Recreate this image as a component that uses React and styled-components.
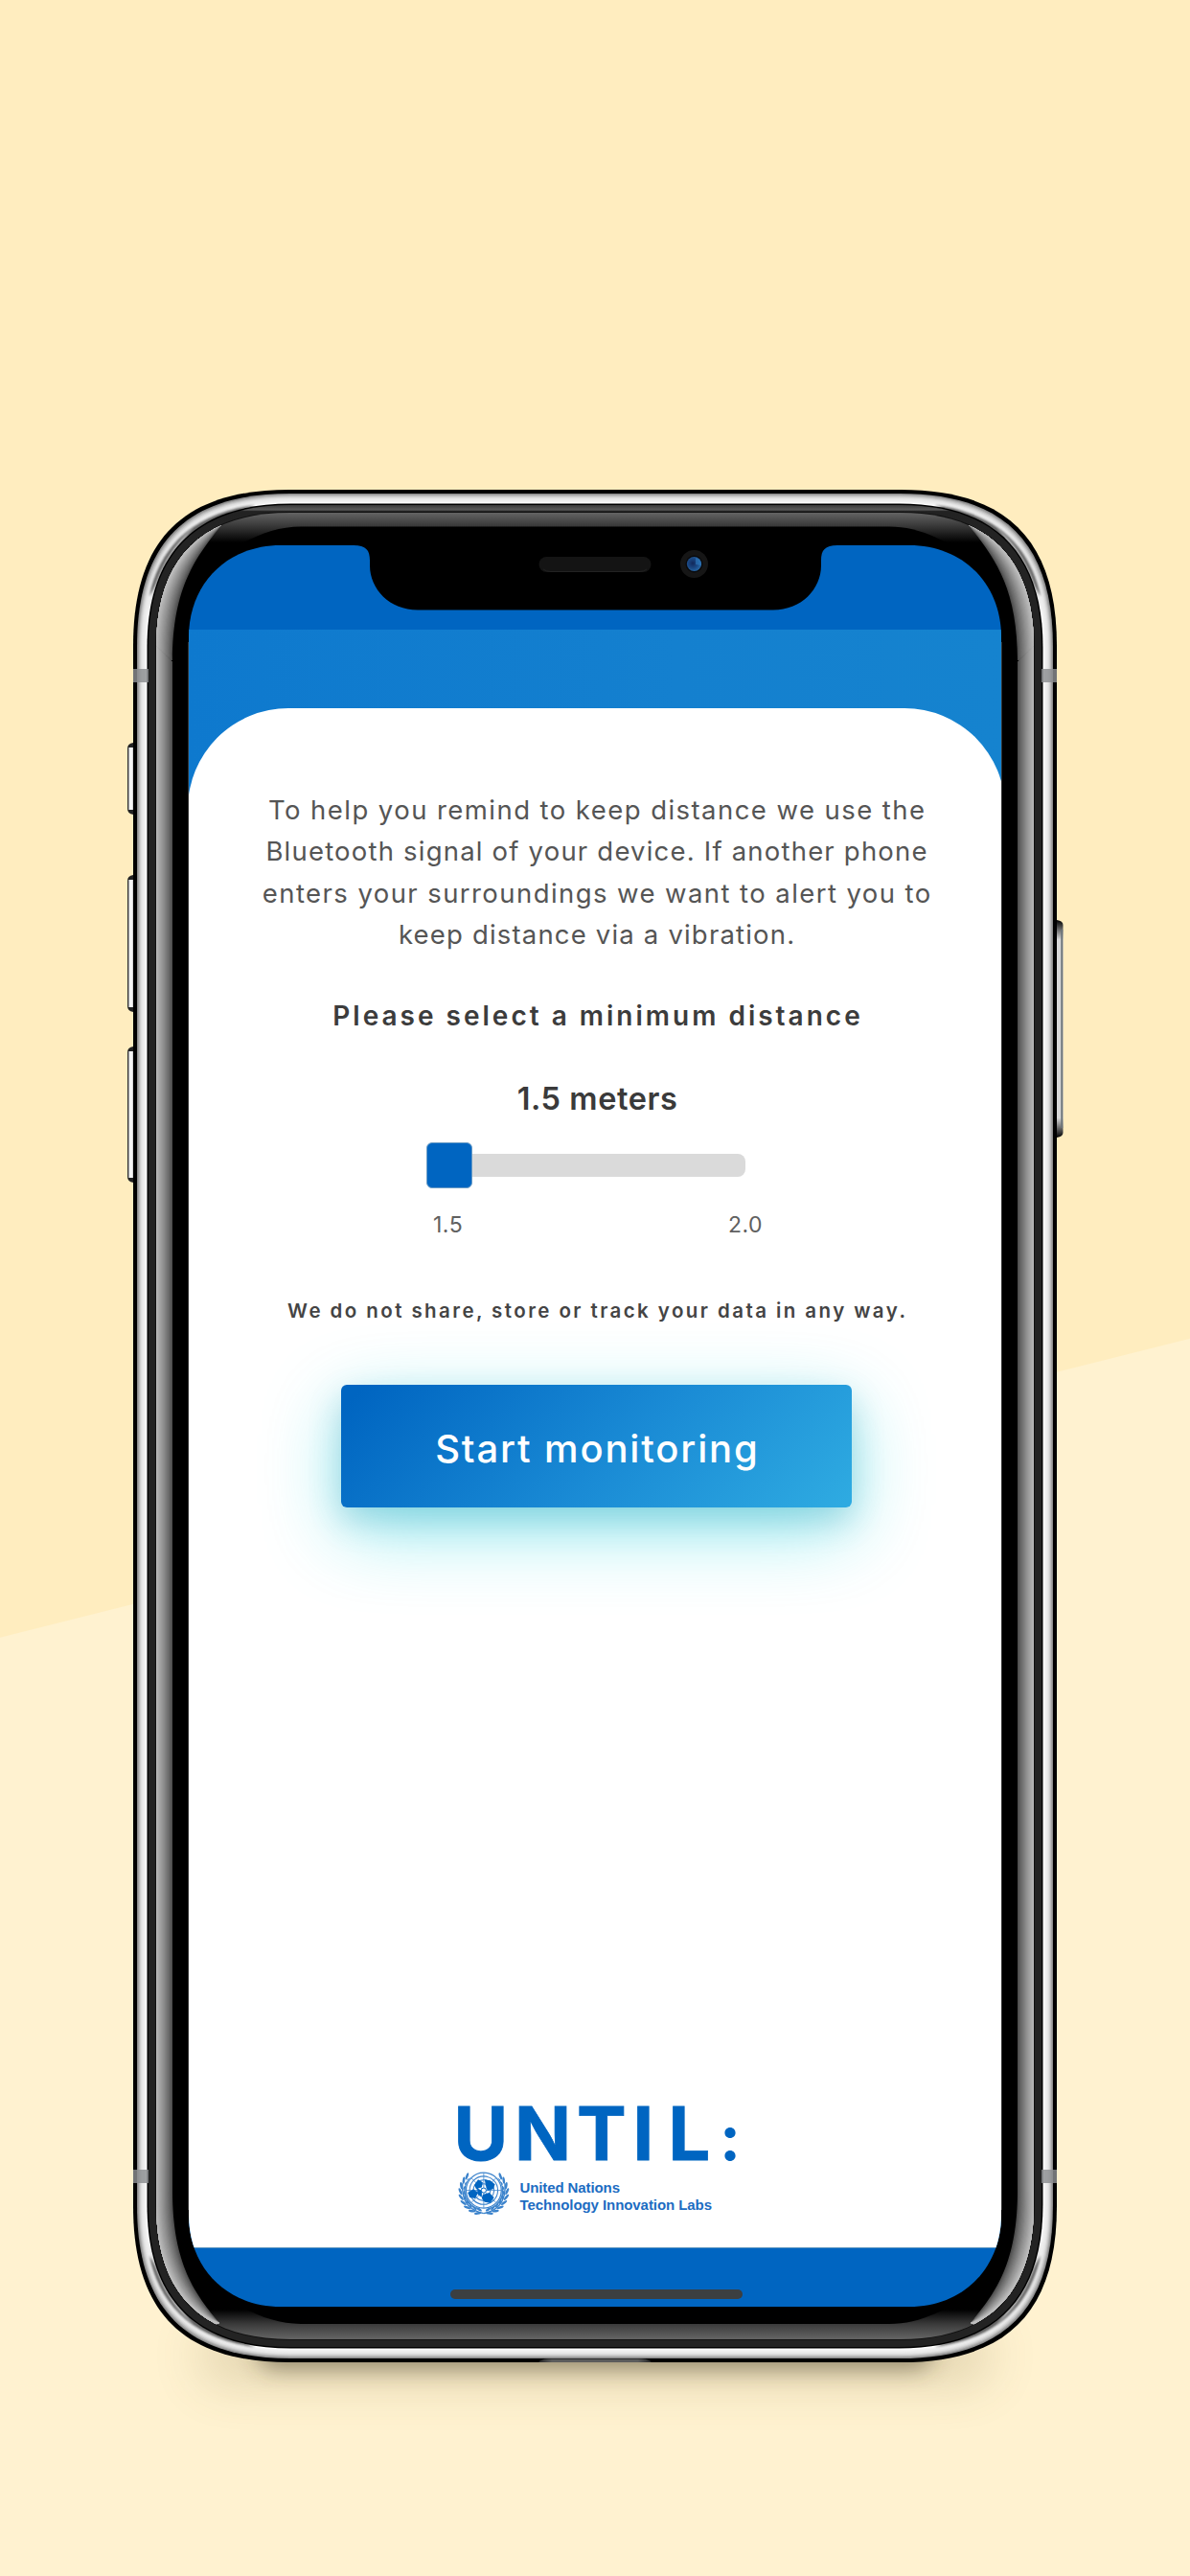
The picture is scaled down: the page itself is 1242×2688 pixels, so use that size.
import React from "react";
import styled, { createGlobalStyle } from "styled-components";

const BLUE = "#0065c1";

const GlobalStyle = createGlobalStyle`
  body {
    margin: 0;
    font-family: Inter, "Liberation Sans", sans-serif;
  }
`;

const Page = styled.main`
  box-sizing: border-box;
  width: 1242px;
  height: 2688px;
  padding-top: 511px;
  display: flex;
  flex-direction: column;
  align-items: center;
  overflow: hidden;
  background: linear-gradient(
    165.9deg,
    #ffedbf calc(50% + 202px),
    #fff2d0 calc(50% + 203px)
  );
`;

const Phone = styled.div`
  position: relative;
  box-sizing: border-box;
  width: 964px;
  height: 1954px;
  padding: 58px;
`;

const ChassisArt = styled.svg`
  position: absolute;
  left: -139px;
  top: -511px;
  width: 1242px;
  height: 2688px;
`;

const NotchArt = styled.svg`
  position: absolute;
  left: 0;
  top: 0;
  width: 848px;
  height: 80px;
`;

const Screen = styled.div`
  position: relative;
  display: flex;
  flex-direction: column;
  width: 848px;
  height: 1838px;
  background: ${BLUE};
  clip-path: path("${(p) => p.$shape}");
`;

const StatusBar = styled.div`
  flex: none;
  height: 88px;
`;

const Body = styled.div`
  flex: 1;
  display: flex;
  padding-top: 82px;
  background: linear-gradient(90deg, #0e79ce, #1480cf 60%, #1583cf);
`;

const Panel = styled.section`
  flex: none;
  box-sizing: border-box;
  width: 853px;
  margin-left: -1px;
  padding: 85px 0 30px;
  display: flex;
  flex-direction: column;
  align-items: center;
  background: #fff;
  border-radius: 105px 105px 0 0;
`;

const HomeBar = styled.footer`
  flex: none;
  box-sizing: border-box;
  height: 62px;
  padding-top: 43px;
  border-top: 1px solid #5f96c0;
  display: flex;
  justify-content: center;
`;

const HomeIndicator = styled.div`
  width: 305px;
  height: 10px;
  margin-left: 2px;
  border-radius: 5px;
  background: #3c3f41;
`;

const Intro = styled.p`
  margin: 0;
  font-size: 27.5px;
  line-height: 43.3px;
  text-align: center;
  color: #555;
`;

const Line = styled.span`
  display: block;
  white-space: nowrap;
  letter-spacing: ${(p) => p.$track}px;
  text-indent: ${(p) => p.$track}px;
`;

const Heading = styled.h2`
  margin: 43px 0 0;
  font-size: 28px;
  font-weight: 600;
  line-height: 40px;
  letter-spacing: 3px;
  text-indent: 3px;
  color: #3c3c3c;
`;

const Value = styled.output`
  margin: 46.5px 0 0 2px;
  font-size: 32.5px;
  font-weight: 600;
  line-height: 40px;
  letter-spacing: 0.56px;
  color: #3a3a3a;
`;

const Slider = styled.div`
  display: flex;
  align-items: center;
  width: 333px;
  height: 47px;
  margin: 25.5px 23px 0 0;
`;

const Thumb = styled.div`
  flex: none;
  box-sizing: border-box;
  width: 48px;
  height: 48px;
  border: 1px solid #6b9cc6;
  border-radius: 6px;
  background: ${BLUE};
`;

const Track = styled.div`
  flex: 1;
  height: 24px;
  border-radius: 0 8px 8px 0;
  background: #dadada;
`;

const Scale = styled.div`
  display: flex;
  justify-content: space-between;
  width: 344px;
  margin: 24px 0 0 3px;
  font-size: 23px;
  line-height: 30px;
  letter-spacing: 0.5px;
  color: #606060;
`;

const Note = styled.p`
  margin: 60px 0 0;
  font-size: 20.5px;
  font-weight: 600;
  line-height: 30px;
  letter-spacing: 2.43px;
  text-indent: 2.43px;
  white-space: nowrap;
  color: #444;
`;

const StartButton = styled.button`
  width: 533px;
  height: 128px;
  flex: none;
  margin: 62px 0 0;
  padding: 4px 0 0;
  border: 0;
  border-radius: 6px;
  font: 500 40px Inter, "Liberation Sans", sans-serif;
  letter-spacing: 1.85px;
  text-indent: 1.85px;
  color: #fff;
  background: linear-gradient(135deg, #0065c1 4%, #1a8bd5 55%, #2eaae1 98%);
  box-shadow: 0 14px 34px rgba(0, 120, 160, 0.24),
    0 24px 80px rgba(20, 215, 225, 0.44);
`;

const Logo = styled.svg`
  flex: none;
  width: 295px;
  height: 120px;
  margin-top: auto;
  overflow: visible;
`;

/* Closed rounded shape whose corners are single cubic curves of reach r. */
function shell(x, y, w, h, r, k) {
  const c = r * (1 - k);
  const R = x + w;
  const B = y + h;
  return (
    `M${x} ${y + r} C${x} ${y + c} ${x + c} ${y} ${x + r} ${y} ` +
    `H${R - r} C${R - c} ${y} ${R} ${y + c} ${R} ${y + r} ` +
    `V${B - r} C${R} ${B - c} ${R - c} ${B} ${R - r} ${B} ` +
    `H${x + r} C${x + c} ${B} ${x} ${B - c} ${x} ${B - r} Z`
  );
}

/* Shell at distance d inside the outer edge of the phone. */
const inset = (d, r, k) => shell(139 + d, 511 + d, 964 - 2 * d, 1954 - 2 * d, r, k);

const grey = (v) => {
  const n = Math.round(v);
  return `rgb(${n},${n},${n})`;
};

const STEEL = [140, 164, 190, 210, 224, 232, 236, 240, 246, 254];
const BEVEL = Array.from({ length: 16 }, (_, i) => i / 15);
const CORNERS = [
  "translate(0 0)",
  "translate(1242 0) scale(-1 1)",
  "translate(0 2976) scale(1 -1)",
  "translate(1242 2976) scale(-1 -1)",
];

/* Left-hand glare band: t = 0 spans the whole bevel, t = 1 hugs its outer edge. */
function glare(t) {
  const m = (a, b) => a + (b - a) * t;
  const x = m(180, 163);
  const cx = m(205, 190);
  const cy = m(581, 566);
  const straight = m(690, 674);
  const foot = 2976;
  return (
    `M150 ${straight} L${x} ${straight} C${x} 612 ${cx} ${cy} 231 548 L150 520 Z ` +
    `M150 ${straight - 1} H${x} V${foot - straight + 1} H150 Z ` +
    `M150 ${foot - straight} L${x} ${foot - straight} C${x} ${foot - 612} ${cx} ${foot - cy} 229 ${foot - 552} L150 ${foot - 520} Z`
  );
}

function Glare() {
  return BEVEL.map((t) => (
    <path key={t} d={glare(t)} fill={grey(78 + 112 * Math.pow(t, 0.85))} />
  ));
}

/* Dark reflection where the steel band turns the corner; it tapers at both ends. */
function CornerShade() {
  return (
    <g clipPath="url(#steelClip)">
      <path
        d="M156 622 C166 574 198 536 266 527 C222 545 190 568 156 622 Z"
        fill="#2e2e2e"
        opacity=".75"
        filter="url(#smudge)"
      />
      <path
        d="M155 640 C160 604 176 572 202 550 C180 578 164 604 155 640 Z"
        fill="#c8c8c8"
        opacity=".85"
        filter="url(#smudge)"
      />
    </g>
  );
}

function SideButton({ y, h }) {
  return (
    <g>
      <path
        d={`M143 ${y} H139 Q133 ${y + 1} 133 ${y + 6} V${y + h - 6} Q133 ${y + h - 1} 139 ${y + h} H143 Z`}
        fill="#222"
      />
      <rect x="133.8" y={y + 5} width="6.6" height={h - 10} fill="url(#key)" />
    </g>
  );
}

function Chassis() {
  return (
    <ChassisArt viewBox="0 0 1242 2688" aria-hidden="true">
      <defs>
        <clipPath id="bevelClip">
          <path d={inset(24, 140, 0.66)} />
        </clipPath>
        <clipPath id="steelClip">
          <path d={inset(5, 159, 0.68)} />
        </clipPath>
        <linearGradient id="bevelTop" gradientUnits="userSpaceOnUse" x1="0" y1="534" x2="0" y2="566">
          <stop offset="0" stopColor="#666" />
          <stop offset=".47" stopColor="#383838" />
          <stop offset="1" stopColor="#000" />
        </linearGradient>
        <linearGradient id="bevelBottom" gradientUnits="userSpaceOnUse" x1="0" y1="2440" x2="0" y2="2410">
          <stop offset="0" stopColor="#626262" />
          <stop offset=".5" stopColor="#3a3a3a" />
          <stop offset="1" stopColor="#000" />
        </linearGradient>
        <linearGradient id="ringTop" gradientUnits="userSpaceOnUse" x1="0" y1="527" x2="0" y2="560">
          <stop offset="0" stopColor="#3a3a3a" />
          <stop offset=".15" stopColor="#5a5a5a" />
          <stop offset=".2" stopColor="#222" />
          <stop offset="1" stopColor="#232323" />
        </linearGradient>
        <linearGradient id="key" x1="0" x2="1" y1="0" y2="0">
          <stop offset="0" stopColor="#777" />
          <stop offset=".3" stopColor="#fff" />
          <stop offset=".65" stopColor="#f0f0f0" />
          <stop offset="1" stopColor="#555" />
        </linearGradient>
        <linearGradient id="power" x1="0" x2="0" y1="0" y2="1">
          <stop offset="0" stopColor="#000" />
          <stop offset=".09" stopColor="#d8d8d8" />
          <stop offset=".91" stopColor="#d8d8d8" />
          <stop offset="1" stopColor="#000" />
        </linearGradient>
        <linearGradient id="port" x1="0" x2="1" y1="0" y2="0">
          <stop offset="0" stopColor="#222" />
          <stop offset=".12" stopColor="#5c5c5c" />
          <stop offset=".88" stopColor="#5c5c5c" />
          <stop offset="1" stopColor="#222" />
        </linearGradient>
        <radialGradient id="lens" cx=".4" cy=".45" r=".65">
          <stop offset="0" stopColor="#12285a" />
          <stop offset=".55" stopColor="#1b4a86" />
          <stop offset="1" stopColor="#2b6fae" />
        </radialGradient>
        <filter id="smudge" x="-20%" y="-20%" width="140%" height="140%">
          <feGaussianBlur stdDeviation="1" />
        </filter>
        <filter id="soft" x="-20%" y="-200%" width="140%" height="500%">
          <feGaussianBlur stdDeviation="12" />
        </filter>
        <filter id="wide" x="-20%" y="-200%" width="140%" height="500%">
          <feGaussianBlur stdDeviation="26" />
        </filter>
      </defs>

      <rect x="210" y="2430" width="822" height="56" rx="20" fill="#6b5a2c" opacity=".2" filter="url(#wide)" />
      <rect x="270" y="2430" width="702" height="41" rx="16" fill="#3c3420" opacity=".52" filter="url(#soft)" />

      <SideButton y={775} h={75} />
      <SideButton y={913} h={143} />
      <SideButton y={1092} h={142} />
      <path d="M1100 960 H1103 Q1109.5 961 1109.5 965 V1182 Q1109.5 1186 1103 1187 H1100 Z" fill="url(#power)" />
      <path d="M1108.3 970 V1177" stroke="#6c747a" strokeWidth="2" />
      <path d="M1102 966 V1181" stroke="#000" strokeWidth="2" />

      <path d={inset(0, 163, 0.68)} fill="#000" />
      {STEEL.map((v, i) => (
        <path key={v} d={inset(4 + i * 1.05, 160 - i * 0.8, 0.68)} fill={grey(v)} />
      ))}
      {CORNERS.map((t) => (
        <g key={t} transform={t}>
          <CornerShade />
        </g>
      ))}
      <path d={inset(14.5, 150, 0.66)} fill="#000" />
      <path d={inset(16, 148, 0.66)} fill="url(#ringTop)" />
      <path d={inset(23, 141, 0.66)} fill="#111" />
      <g clipPath="url(#bevelClip)">
        <rect x="139" y="511" width="964" height="977" fill="url(#bevelTop)" />
        <rect x="139" y="1488" width="964" height="977" fill="url(#bevelBottom)" />
        <path d={shell(180, 549.5, 882, 1875.5, 134, 0.5)} fill="#000" />
        <Glare />
        <g transform="translate(1242 0) scale(-1 1)">
          <Glare />
        </g>
      </g>

      <g fill="#8b8e90" opacity=".82">
        <rect x="139" y="698" width="16" height="14" />
        <rect x="1087" y="698" width="16" height="14" />
        <rect x="139" y="2264" width="16" height="14" />
        <rect x="1087" y="2264" width="16" height="14" />
      </g>
      <path d="M562 2465 Q564 2461.5 572 2461.5 H670 Q678 2461.5 680 2465 Z" fill="url(#port)" />
      <path d="M196.5 670 V2306 M1045.5 670 V2306" stroke="#333" />
    </ChassisArt>
  );
}

function Notch() {
  return (
    <NotchArt viewBox="0 0 848 80" aria-hidden="true">
      <path d="M172 -2 V0 C185 0 189 5 189 16 V21 C189 46 210 67.5 239 67.5 H610 C639 67.5 660 46 660 21 V16 C660 5 664 0 677 0 V-2 Z" />
      <rect x="365.5" y="12" width="117" height="16" rx="8" fill="#141414" />
      <path d="M370 25 Q373 27.5 378 27.5 H470 Q475 27.5 478 25" fill="none" stroke="#222" />
      <circle cx="527.5" cy="19.5" r="14.5" fill="#161616" />
      <circle cx="527.5" cy="19.5" r="9" fill="#0a0a0c" />
      <circle cx="527.5" cy="19.5" r="7.6" fill="url(#lens)" />
      <path d="M529 13 Q535 14 535 21 L529 20 Z" fill="#2f7cc0" opacity=".6" />
    </NotchArt>
  );
}

const LEAVES = [104, 119, 134, 149, 164, 179, 194, 209, 222];

function Laurel() {
  return (
    <g>
      <path d="M27 44 C12 41 3 31 4.5 12" fill="none" stroke="#3b83cc" strokeWidth="1.4" />
      {LEAVES.map((a) => {
        const r = (a * Math.PI) / 180;
        const x = 27.5 + 23 * Math.cos(r);
        const y = 21 + 21.5 * Math.sin(r);
        return (
          <g key={a} transform={`translate(${x} ${y}) rotate(${a + 90})`} fill="#3b83cc">
            <ellipse cx="1.6" cy="-1.9" rx="3.8" ry="1.3" transform="rotate(-22)" />
            <ellipse cx="1.6" cy="1.9" rx="3.8" ry="1.3" transform="rotate(22)" />
          </g>
        );
      })}
    </g>
  );
}

function Emblem() {
  return (
    <g transform="translate(3.4 71.5) scale(.98)">
      <Laurel />
      <g transform="translate(54 0) scale(-1 1)">
        <Laurel />
      </g>
      <circle cx="27" cy="19.5" r="19.6" fill="#fff" />
      <g fill="none" stroke="#3b83cc" strokeWidth="1.1">
        <circle cx="27" cy="19.5" r="18.8" strokeWidth="1.3" />
        <circle cx="27" cy="19.5" r="15" />
        <circle cx="27" cy="19.5" r="11" />
        <circle cx="27" cy="19.5" r="7" />
        <path d="M27 1 V38 M8.5 19.5 H45.5 M14 6.5 L40 32.5 M40 6.5 L14 32.5" strokeWidth=".8" />
      </g>
      <g fill={BLUE}>
        <path d="M17 14 L21 8 L26 11 L25 16 L19 18 Z" />
        <path d="M28 8 L34 9 L39 13 L37 18 L31 20 L29 14 Z" />
        <path d="M10 22 L16 18 L21 22 L18 28 L12 27 Z" />
        <path d="M20 17 L25 20 L25 26 L21 24 Z" />
        <path d="M26 24 L33 22 L38 27 L34 33 L28 32 L25 28 Z" />
      </g>
      <circle cx="27" cy="19.5" r="2.6" fill="#fff" stroke={BLUE} />
    </g>
  );
}

function UntilLogo() {
  return (
    <Logo viewBox="0 0 295 120">
      <g fill={BLUE} fontFamily='Inter, "Liberation Sans", sans-serif' fontWeight="700">
        <text x="-1.5 62 127 185.5 222.5" y="59" fontSize="77.5" stroke={BLUE} strokeWidth=".8">
          UNTIL
        </text>
        <text x="276" y="59" fontSize="66">
          :
        </text>
      </g>
      <Emblem />
      <g fill="#1c6cc2" fontFamily='"Liberation Sans", Arial, sans-serif' fontWeight="700" fontSize="15">
        <text x="67.5" y="93" textLength="104.5">
          United Nations
        </text>
        <text x="67.5" y="111" textLength="200.5">
          Technology Innovation Labs
        </text>
      </g>
    </Logo>
  );
}

const INTRO = [
  { text: "To help you remind to keep distance we use the", track: 1.44 },
  { text: "Bluetooth signal of your device. If another phone", track: 1.2 },
  { text: "enters your surroundings we want to alert you to", track: 1.42 },
  { text: "keep distance via a vibration.", track: 1.18 },
];

export default function App() {
  return (
    <>
      <GlobalStyle />
      <Page>
        <Phone>
          <Chassis />
          <Screen $shape={shell(0, 0, 848, 1838, 96, 0.583)}>
            <StatusBar />
            <Body>
              <Panel>
                <Intro>
                  {INTRO.map((l) => (
                    <Line key={l.text} $track={l.track}>
                      {l.text}
                    </Line>
                  ))}
                </Intro>
                <Heading>Please select a minimum distance</Heading>
                <Value>1.5 meters</Value>
                <Slider>
                  <Thumb />
                  <Track />
                </Slider>
                <Scale>
                  <span>1.5</span>
                  <span>2.0</span>
                </Scale>
                <Note>We do not share, store or track your data in any way.</Note>
                <StartButton type="button">Start monitoring</StartButton>
                <UntilLogo />
              </Panel>
            </Body>
            <HomeBar>
              <HomeIndicator />
            </HomeBar>
            <Notch />
          </Screen>
        </Phone>
      </Page>
    </>
  );
}
